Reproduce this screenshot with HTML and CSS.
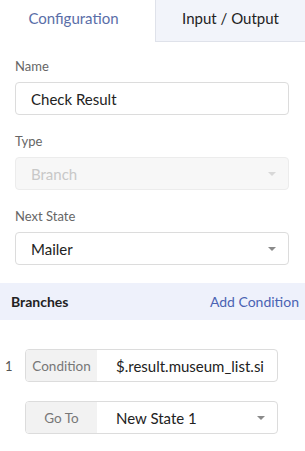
FILE: index.html
```html
<!DOCTYPE html>
<html lang="en">
<head>
  <meta charset="UTF-8" />
  <meta name="viewport" content="width=device-width, initial-scale=1.0"/>
  <title>State Settings</title>
  <link rel="stylesheet" href="styles.css">
</head>
<body>
  <div class="tabs">
    <div class="tab active">Configuration</div>
    <div class="tab">Input / Output</div>
  </div>

  <div class="form">
    <div class="field">
      <label>Name</label>
      <div class="input">Check Result</div>
    </div>
    <div class="field">
      <label>Type</label>
      <div class="input select disabled">Branch<span class="caret"></span></div>
    </div>
    <div class="field">
      <label>Next State</label>
      <div class="input select">Mailer<span class="caret"></span></div>
    </div>
  </div>

  <div class="branchesBar">
    <span class="title">Branches</span>
    <span class="addLink">Add Condition</span>
  </div>

  <div class="branch">
    <div class="branchRow">
      <span class="num">1</span>
      <div class="group">
        <span class="addon">Condition</span>
        <span class="value">$.result.museum_list.si</span>
      </div>
    </div>
    <div class="branchRow">
      <span class="num"></span>
      <div class="group">
        <span class="addon">Go To</span>
        <span class="value">New State 1</span>
        <span class="caret"></span>
      </div>
    </div>
  </div>
</body>
</html>
```

FILE: styles.css
```css
* {
  margin: 0;
  padding: 0;
  box-sizing: border-box;
  font-family: 'Lato', 'Liberation Sans', sans-serif;
}

body {
  width: 305px;
  background: #fff;
  color: #222;
}

.tabs {
  display: flex;
  height: 42px;
}

.tab {
  flex: 1;
  display: flex;
  align-items: center;
  justify-content: center;
  font-size: 15px;
  padding-bottom: 6px;
  background: #f2f4fa;
  border-left: 1px solid #dfe2ea;
  border-bottom: 1px solid #dfe2ea;
  color: #222;
}

.tab.active {
  flex: 0 0 155px;
  padding-right: 8px;
  background: #fff;
  border: none;
  color: #5a6ea8;
}

.form {
  padding: 16px 16px 0 15px;
}

.field {
  margin-bottom: 18px;
}

.field label {
  display: block;
  font-size: 13px;
  line-height: 16px;
  color: #666;
  margin-bottom: 8px;
}

.input {
  position: relative;
  height: 33px;
  border: 1px solid #dcdcdc;
  border-radius: 4px;
  padding-left: 15px;
  display: flex;
  align-items: center;
  font-size: 15px;
  color: #222;
}

.input.disabled {
  background: #f7f7f7;
  border-color: #ececec;
  color: #c8c8c8;
}

.caret {
  position: absolute;
  right: 12px;
  top: 50%;
  margin-top: -2px;
  border-left: 4px solid transparent;
  border-right: 4px solid transparent;
  border-top: 4px solid #8a8a8a;
}

.input.disabled .caret {
  border-top-color: #d8d8d8;
}

.branchesBar {
  margin-top: 2px;
  height: 37px;
  background: #eef1fb;
  display: flex;
  align-items: center;
  justify-content: space-between;
  padding: 0 6px 0 11px;
}

.branchesBar .title {
  font-size: 14px;
  font-weight: 700;
  color: #222;
}

.branchesBar .addLink {
  font-size: 14px;
  color: #4a63b3;
}

.branch {
  padding-top: 29px;
}

.branchRow {
  display: flex;
  align-items: center;
  margin-bottom: 19px;
}

.num {
  width: 25px;
  padding-left: 5px;
  font-size: 13px;
  color: #555;
}

.group {
  position: relative;
  width: 253px;
  height: 33px;
  border: 1px solid #dcdcdc;
  border-radius: 4px;
  display: flex;
  overflow: hidden;
}

.addon {
  width: 71px;
  background: #f2f2f2;
  display: flex;
  align-items: center;
  justify-content: center;
  font-size: 13.5px;
  color: #777;
}

.value {
  flex: 1;
  padding-left: 19px;
  display: flex;
  align-items: center;
  font-size: 15px;
  color: #222;
  white-space: nowrap;
  overflow: hidden;
}
```
